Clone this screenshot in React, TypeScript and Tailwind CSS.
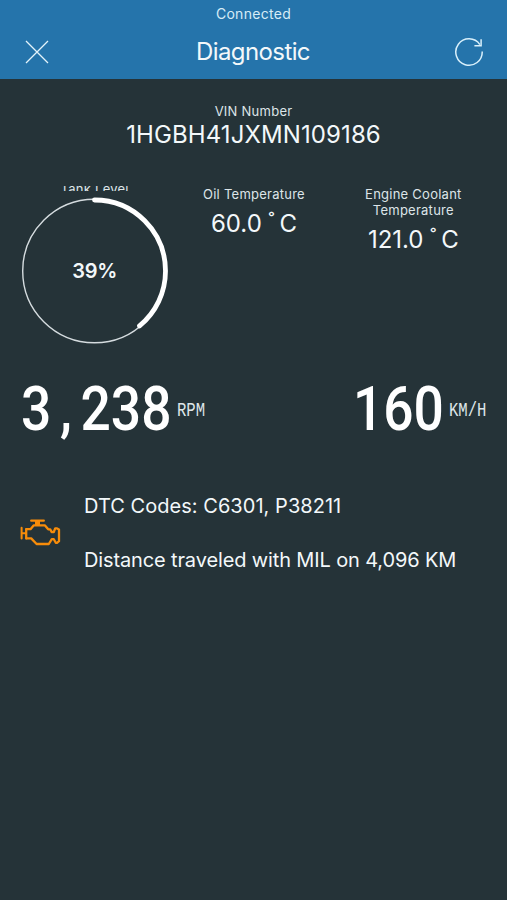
import React from "react";

interface ReadingProps {
  label: string;
  value: string;
  className?: string;
}

function CloseIcon() {
  return (
    <svg width="24" height="24" viewBox="0 0 24 24" fill="none" stroke="#e3f3fb" strokeWidth="1.3">
      <path d="M1 1 23 23M23 1 1 23" />
    </svg>
  );
}

function RefreshIcon() {
  return (
    <svg width="30" height="30" viewBox="0 0 30 30" fill="none" stroke="#d9f0fb" strokeWidth="1.5">
      <path d="M28.2 14.5A13.2 13.2 0 1 1 25.9 7.6" />
      <path d="M27.1 2.2V8.7H20.4" />
    </svg>
  );
}

function EngineIcon() {
  return (
    <svg
      width="42"
      height="30"
      viewBox="0 0 42 30"
      fill="none"
      stroke="#f78c0a"
      strokeWidth="2.3"
      strokeLinejoin="round"
      strokeLinecap="round"
    >
      <path d="M11.2 2.7H23.8" />
      <path d="M17.5 3V7" strokeWidth="5" strokeLinecap="butt" />
      <path d="M1.6 9.8V20.6M2 15.3H6" strokeWidth="2" />
      <path d="M6.2 11.2V20.4" />
      <path d="M6.4 11.2H10.5L13.6 7.4H25L28.2 11.3H30.2L31.6 14H33.8L35.2 10.3H36.6L39 11.6V23.2L37 24.8H35.8L33.8 21.2H31.8L28.8 26H16.6L11.2 20.4H6.4" />
    </svg>
  );
}

function TankGauge({ level }: { level: number }) {
  const radius = 71;
  const length = 2 * Math.PI * radius;

  return (
    <div className="relative w-[148px] h-[148px] flex items-center justify-center">
      <svg className="absolute inset-0 -rotate-90" width="148" height="148" viewBox="0 0 148 148" fill="none">
        <circle cx="74" cy="73.5" r="71.8" stroke="#d5dcdf" strokeWidth="1.4" />
        <circle
          cx="74"
          cy="73.5"
          r={radius}
          stroke="#ffffff"
          strokeWidth="4.8"
          strokeLinecap="round"
          strokeDasharray={`${(length * level) / 100} ${length}`}
        />
      </svg>
      <span className="relative text-[20px] leading-6 font-semibold tracking-[-0.3px]">{level}%</span>
    </div>
  );
}

function Reading({ label, value, className = "" }: ReadingProps) {
  return (
    <div className={`flex flex-col items-center text-center ${className}`}>
      <p className="text-[13px] leading-4 tracking-[0.25px] text-[#dde5e8]">{label}</p>
      <p className="mt-[9px] h-[24px] text-[24px] leading-[24px] whitespace-pre">
        {value} <span className="inline-block align-[4px] text-[20px] leading-none tracking-[5px]">˚</span>C
      </p>
    </div>
  );
}

export default function App() {
  return (
    <div className="w-full h-[900px] overflow-hidden bg-[#253338] text-[#f3f8fa] font-['Inter',sans-serif]">
      {/* Header */}
      <header className="h-[79px] bg-[#2574ab] flex flex-col">
        <p className="h-[27px] text-center text-[14px] leading-[27px] tracking-[0.3px] text-[#d6ecf7]">
          Connected
        </p>
        <div className="h-[49px] flex items-center justify-between pl-[22px] pr-[23px]">
          <div className="w-[30px] flex justify-center">
            <CloseIcon />
          </div>
          <h1 className="text-[24px] leading-[30px] tracking-[-0.6px]">Diagnostic</h1>
          <RefreshIcon />
        </div>
      </header>

      {/* VIN */}
      <section className="pt-[24px] text-center">
        <p className="text-[13px] leading-4 tracking-[0.25px] text-[#dde5e8]">VIN Number</p>
        <p className="pt-[1px] text-[24px] leading-[30px] tracking-[0.1px]">1HGBH41JXMN109186</p>
      </section>

      {/* Fluids */}
      <section className="mt-[36px] pl-[15px] pr-[14px] grid grid-cols-3">
        <div className="flex flex-col items-center">
          {/* Label is clipped by its row */}
          <div className="h-[5px] w-full overflow-hidden flex items-center justify-center">
            <p className="text-[13px] leading-4 tracking-[0.25px] text-[#dde5e8]">Tank Level</p>
          </div>
          <div className="mt-[6px]">
            <TankGauge level={39} />
          </div>
        </div>
        <Reading label="Oil Temperature" value="60.0" />
        <Reading label="Engine Coolant Temperature" value="121.0" className="px-6" />
      </section>

      {/* Speed and revs */}
      <section className="mt-[34px] h-[60px] px-[20px] flex items-center justify-between font-['Roboto',sans-serif] text-white">
        <div className="flex items-center">
          <div className="w-[151px] ml-[1px]">
            <span className="block w-0 origin-left scale-x-[0.86] text-[62px] leading-[60px] font-medium whitespace-nowrap">
              3<span className="inline-block w-[34px] text-center">,</span>238
            </span>
          </div>
          <div className="ml-[5px] w-[30px] pt-[4px] font-['Liberation_Mono',monospace]">
            <span className="block w-0 origin-left scale-x-[0.78] text-[20px] leading-5 text-[#dde5e8]">RPM</span>
          </div>
        </div>
        <div className="flex items-center">
          <div className="w-[90px]">
            <span className="block w-0 origin-left scale-x-[0.86] text-[62px] leading-[60px] font-medium">160</span>
          </div>
          <div className="ml-[6px] w-[38px] pt-[4px] font-['Liberation_Mono',monospace]">
            <span className="block w-0 origin-left scale-x-[0.78] text-[20px] leading-5 text-[#dde5e8]">KM/H</span>
          </div>
        </div>
      </section>

      {/* Trouble codes */}
      <section className="mt-[55px] pl-[20px] flex items-center">
        <EngineIcon />
        <div className="ml-[22px] flex flex-col gap-[30px] text-[20px] leading-6">
          <p className="tracking-[0.04px]">DTC Codes: C6301, P38211</p>
          <p className="tracking-[-0.13px]">Distance traveled with MIL on 4,096 KM</p>
        </div>
      </section>
    </div>
  );
}
